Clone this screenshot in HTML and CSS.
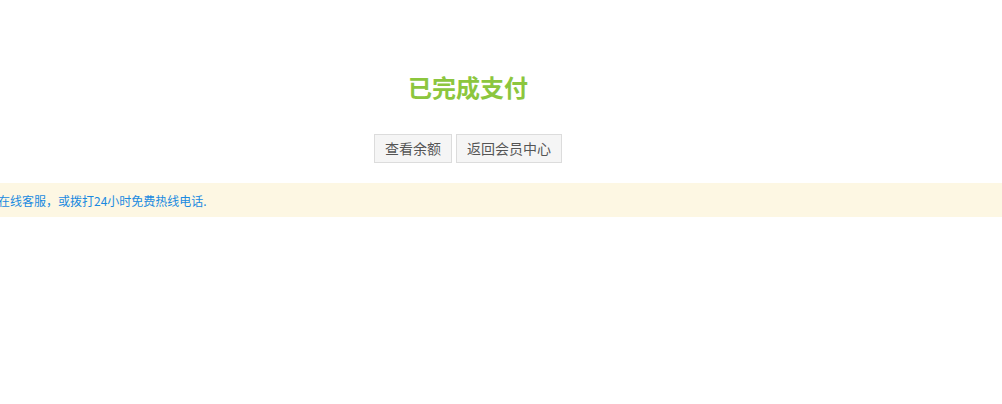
FILE: index.html
```html
<!DOCTYPE html>
<html lang="zh-CN">
<head>
<meta charset="utf-8">
<link rel="stylesheet" href="styles.css">
</head>
<body>
<div class="page">
  <div class="result">
    <h1 class="title">已完成支付</h1>
    <div class="actions">
      <a class="btn">查看余额</a>
      <a class="btn">返回会员中心</a>
    </div>
  </div>
  <div class="tip">
    <p class="tip-text">如有疑问，请联系在线客服，或拨打24小时免费热线电话.</p>
  </div>
</div>
</body>
</html>
```
FILE: styles.css
```css
html, body {
  margin: 0;
  padding: 0;
  background: #fff;
  font-family: "Microsoft YaHei", "Noto Sans CJK SC", "Liberation Sans", sans-serif;
  overflow: hidden;
}
.page {
  width: 1002px;
  height: 404px;
  overflow: hidden;
}
.result {
  width: 936px;
  padding-top: 72px;
  display: flex;
  flex-direction: column;
  align-items: center;
}
.title {
  margin: 0;
  font-size: 24px;
  line-height: 30px;
  font-weight: bold;
  color: #8cc63e;
}
.actions {
  margin-top: 32px;
  display: flex;
  gap: 4px;
}
.btn {
  display: block;
  box-sizing: border-box;
  height: 29px;
  line-height: 27px;
  padding: 0 10px;
  border: 1px solid #dcdcdc;
  background: #f5f5f5;
  color: #555;
  font-size: 14px;
  cursor: pointer;
}
.tip {
  margin-top: 20px;
  height: 34px;
  background: #fdf7e3;
  display: flex;
  align-items: center;
  overflow: hidden;
}
.tip-text {
  margin: 0 0 0 -98px;
  white-space: nowrap;
  font-size: 12px;
  color: #1a8ae0;
}
```
